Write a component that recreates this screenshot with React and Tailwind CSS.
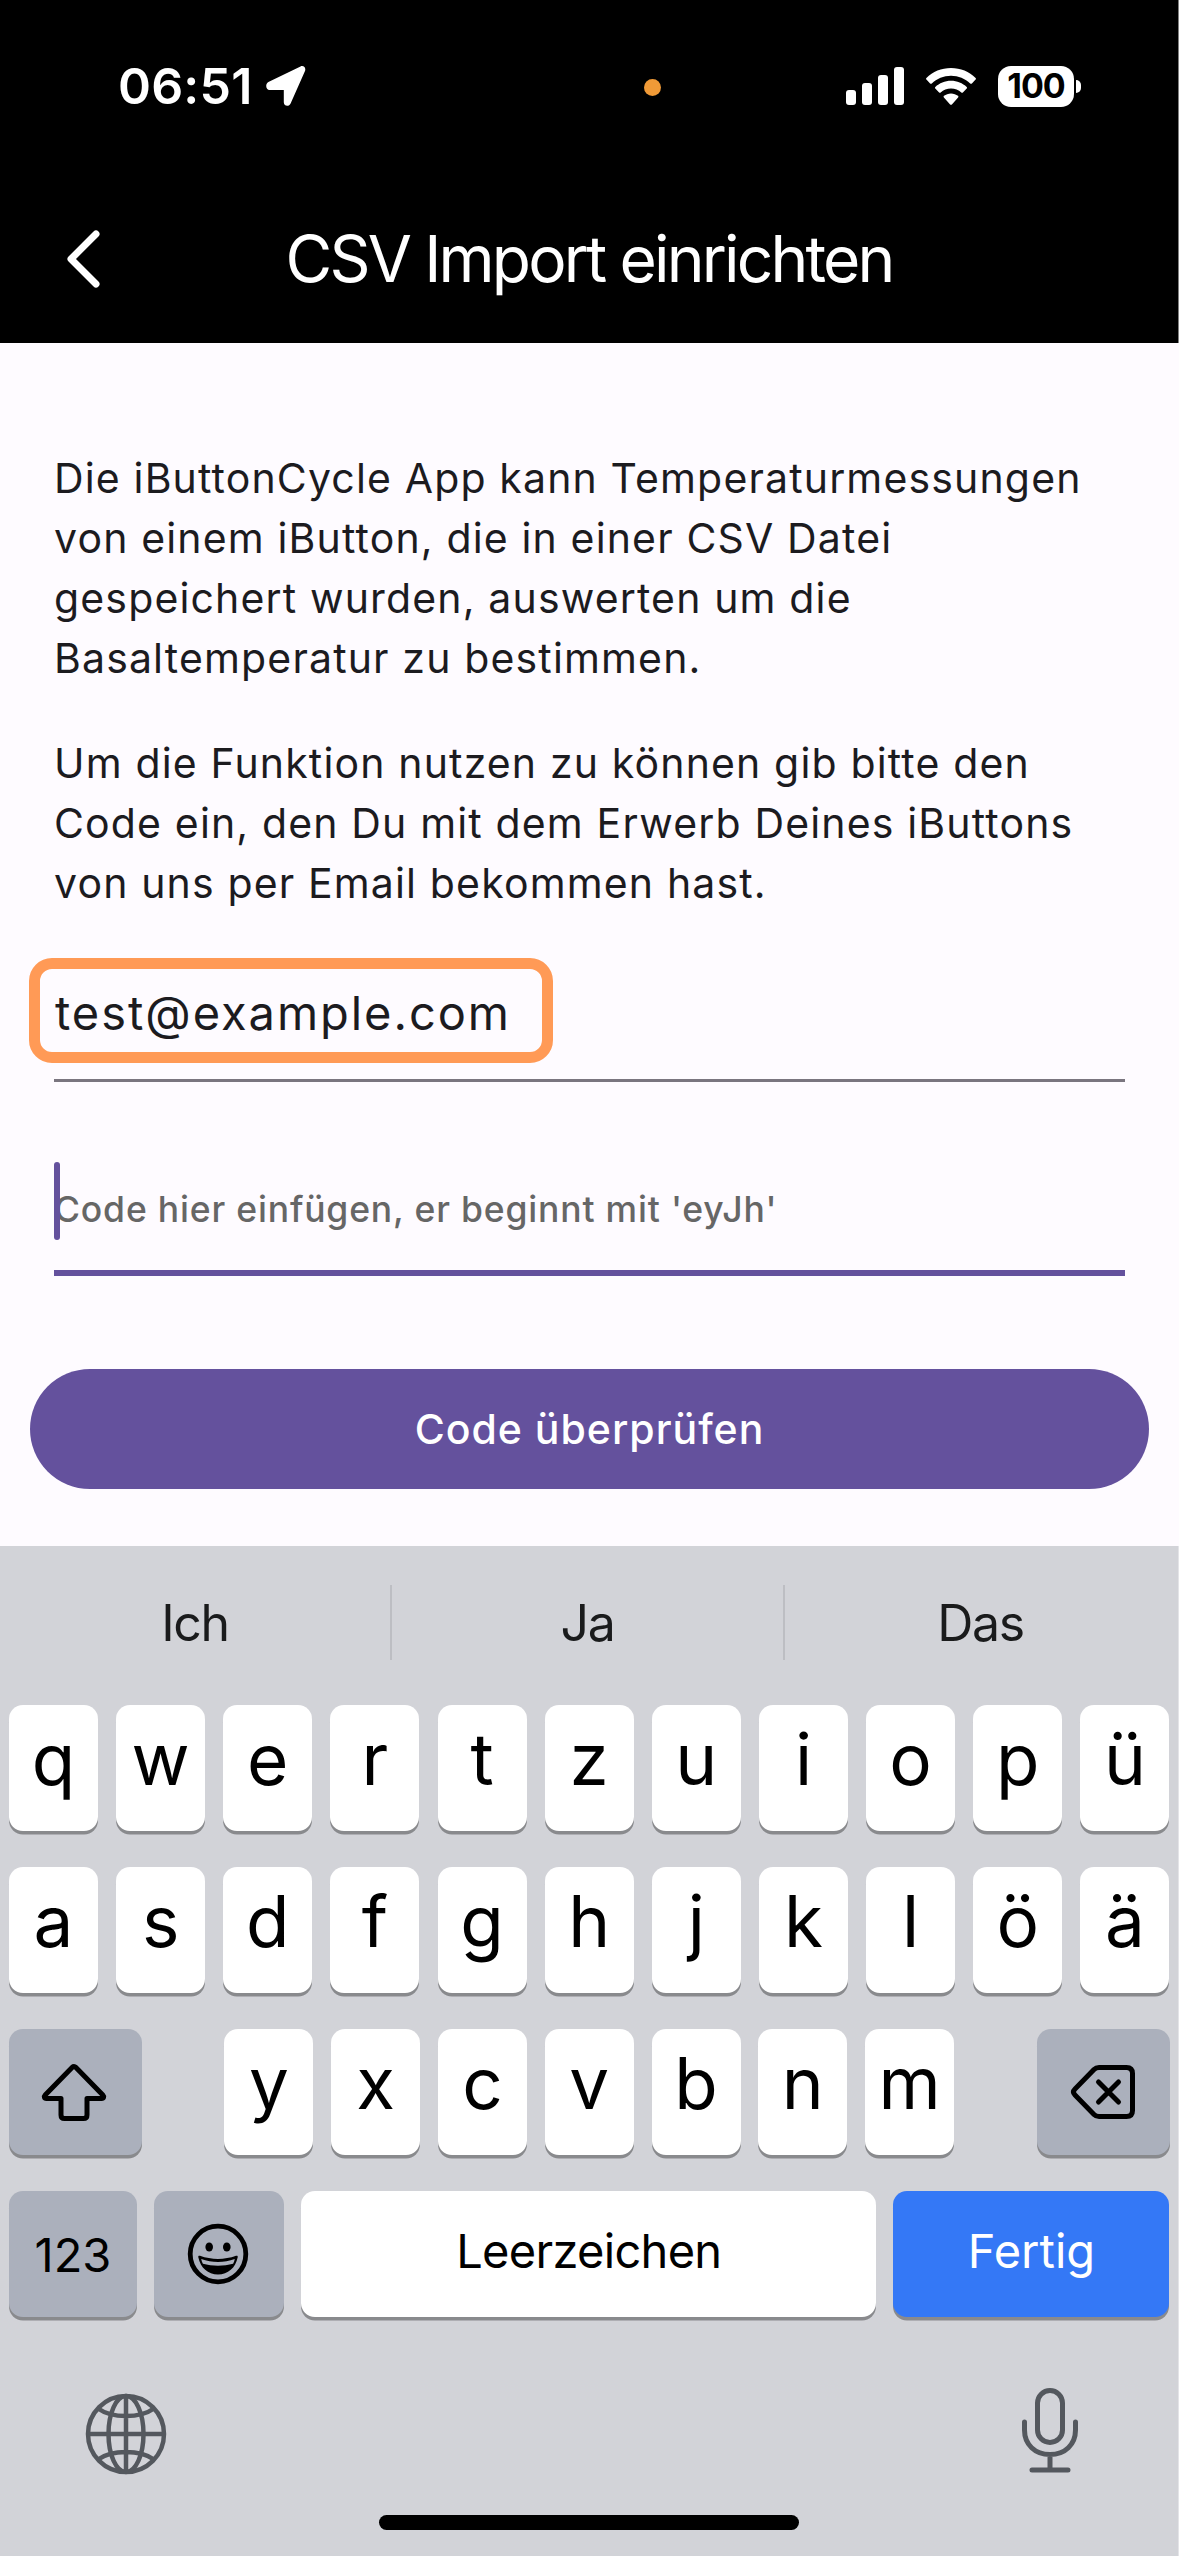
const FONT = "font-['Inter','Liberation_Sans',sans-serif]";

function StatusBar() {
  return (
    <div className="flex h-[172px] items-start pt-[56px] text-white">
      <div className="flex h-[60px] w-[644px] items-center pl-[118px]">
        <span className="w-[148px] text-[50px] leading-[60px] font-semibold tracking-[0.2px] whitespace-nowrap">06:51</span>
        <svg width="40" height="40" viewBox="0 0 40 40" fill="currentColor">
          <path d="M34.500.5 2.400 16C-1 17.800-.3 24 3.600 24h14.200v12.200c0 4 5.200 5 6.800 1.200L39 5C40.200 2 37.600-1 34.500.5Z" />
        </svg>
      </div>
      <div className="mt-[23px] size-[17px] rounded-full bg-[#f09a37]" />
      <div className="flex h-[60px] items-center pl-[185px]">
        <svg width="58" height="42" viewBox="0 0 58 42" fill="currentColor">
          <rect x="0" y="25" width="10" height="15" rx="3" />
          <rect x="16" y="18" width="10" height="22" rx="3" />
          <rect x="32" y="10" width="10" height="30" rx="3" />
          <rect x="48" y="2" width="10" height="38" rx="3" />
        </svg>
        <svg className="ml-[22px]" width="50" height="37" viewBox="0 0 50 37" fill="currentColor">
          <path d="M25 0C15.500 0 6.700 3.700.4 9.900c-.5.5-.5 1.200 0 1.700l3.700 3.800c.5.500 1.200.5 1.700 0C10.800 10.600 17.600 7.700 25 7.700s14.200 2.900 19.200 7.700c.5.500 1.200.500 1.700 0l3.700-3.800c.5-.5.500-1.200 0-1.700C43.300 3.700 34.500 0 25 0Z" />
          <path d="M25 12.700c-6.100 0-11.600 2.400-15.700 6.200-.5.500-.5 1.200 0 1.700l3.800 3.800c.5.500 1.100.5 1.600 0 2.700-2.400 6.300-3.900 10.300-3.900s7.600 1.500 10.300 3.900c.5.500 1.100.500 1.600 0l3.800-3.800c.5-.5.5-1.200 0-1.700-4.100-3.800-9.600-6.200-15.700-6.200Z" />
          <path d="M25 25.400c-2.700 0-5.100.9-7 2.400-.5.400-.5 1.100-.1 1.600l6.200 7c.5.500 1.300.5 1.800 0l6.200-7c.4-.5.400-1.200-.1-1.600-1.900-1.500-4.300-2.400-7-2.400Z" />
        </svg>
        <div className="ml-[22px] flex h-[41px] w-[76px] items-center justify-center rounded-[13px] bg-white text-[34px] leading-none font-bold tracking-[-1px] text-black">100</div>
        <div className="ml-[2px] h-[13px] w-[5px] rounded-r-full bg-white" />
      </div>
    </div>
  );
}

function Header() {
  return (
    <header className="h-[343px] border-r border-[#808080] bg-black">
      <StatusBar />
      <div className="flex h-[174px] items-center text-white">
        <svg className="ml-[66px]" width="34" height="58" viewBox="0 0 34 58" fill="none" stroke="currentColor" strokeWidth="7" strokeLinecap="round" strokeLinejoin="round">
          <path d="M30 4 5 29l25 25" />
        </svg>
        <h1 className="w-[978px] text-center text-[64px] leading-[80px] font-normal tracking-[-2.8px] whitespace-nowrap">CSV Import einrichten</h1>
      </div>
    </header>
  );
}

function Form() {
  return (
    <main className="flex h-[1203px] flex-col bg-[#fefbff] px-[30px] pt-[105px] text-[#1c1b1f]">
      <div className="flex flex-col gap-[45px] px-[24px] text-[41px] leading-[60px] tracking-[1.15px] whitespace-nowrap">
        <p>
          Die iButtonCycle App kann Temperaturmessungen<br />
          von einem iButton, die in einer CSV Datei<br />
          gespeichert wurden, auswerten um die<br />
          Basaltemperatur zu bestimmen.
        </p>
        <p>
          Um die Funktion nutzen zu können gib bitte den<br />
          Code ein, den Du mit dem Erwerb Deines iButtons<br />
          von uns per Email bekommen hast.
        </p>
      </div>
      <div className="mt-[45px] -ml-px flex h-[105px] w-[524px] items-center rounded-[23px] border-[11px] border-[#ff9a56] pt-[3px] pl-[15px] text-[47px] leading-none tracking-[1.95px]">
        test@example.com
      </div>
      <div className="mx-[24px] mt-[16px] h-[3px] bg-[#7a757f]" />
      <div className="mx-[24px] mt-[80px] flex h-[78px]">
        <div className="z-10 w-[6px] rounded-full bg-[#64519d]" />
        <span className="-ml-[6px] pt-[18px] text-[35.500px] leading-[60px] font-medium tracking-[0.820px] whitespace-nowrap text-[#666]">Code hier einfügen, er beginnt mit 'eyJh'</span>
      </div>
      <div className="mx-[24px] mt-[30px] h-[6px] bg-[#64519d]" />
      <button className="mt-[93px] flex h-[120px] items-center justify-center rounded-full bg-[#64519d] pt-[2px] text-[41px] font-medium tracking-[1px] text-white">
        Code überprüfen
      </button>
    </main>
  );
}

const KEY = "flex h-[126px] items-center justify-center rounded-[14px] shadow-[0_3.500px_0_#898a8d]";

function Letter({ children }) {
  return <div className={`${KEY} w-[89px] bg-white pb-[17px] text-[71px] leading-none`}>{children}</div>;
}

function ShiftIcon() {
  return (
    <svg className="mr-[3px] mb-[1px]" width="66" height="60" viewBox="0 0 66 60" fill="none" stroke="black" strokeWidth="5" strokeLinejoin="round">
      <path d="M31.300 5.200 4.200 33c-1.600 1.700-.8 3.500 1.200 3.500H20V53c0 2.200 1.200 3.500 3.500 3.500h19c2.300 0 3.500-1.300 3.500-3.500V36.500h14.600c2 0 2.800-1.800 1.200-3.500L34.700 5.200c-1-1-2.400-1-3.400 0Z" />
    </svg>
  );
}

function BackspaceIcon() {
  return (
    <svg className="mb-[1px]" width="66" height="56" viewBox="0 0 66 56" fill="none" stroke="black" strokeWidth="5" strokeLinecap="round" strokeLinejoin="round">
      <path d="M29 3.500h27.500c4 0 6 2 6 6v37c0 4-2 6-6 6H29c-2 0-3.500-.5-5-2L5 31c-2-2-2-4 0-6L24 5.500c1.500-1.500 3-2 5-2Z" />
      <path d="m28.500 18 20 20m0-20-20 20" />
    </svg>
  );
}

function SmileIcon() {
  return (
    <svg className="mr-[2px]" width="62" height="62" viewBox="0 0 62 62" fill="none">
      <circle cx="31" cy="31" r="27.800" stroke="black" strokeWidth="4.800" />
      <ellipse cx="22.200" cy="24" rx="3.800" ry="4.500" fill="black" />
      <ellipse cx="39.800" cy="24" rx="3.800" ry="4.500" fill="black" />
      <path d="M13 32.800c11.500 4.200 24.500 4.200 36 0 1.300-.5 2 .3 1.700 1.500C48.500 45 41 51.500 31 51.500S13.500 45 11.300 34.300c-.3-1.200.4-2 1.700-1.500Z" fill="black" />
      <path d="M14.200 36c10.800 4 22.800 4 33.600 0-.3 1.800-.9 3.400-1.700 4.700-9.400 2.600-20.800 2.600-30.200 0-.8-1.300-1.400-2.900-1.700-4.700Z" fill="#abb0bc" />
    </svg>
  );
}

function GlobeIcon() {
  return (
    <svg width="82" height="82" viewBox="0 0 82 82" fill="none" stroke="#54585e" strokeWidth="4.500">
      <circle cx="41" cy="41" r="38" />
      <ellipse cx="41" cy="41" rx="17.500" ry="38" />
      <path d="M41 3v76M3 41h76M13 15.500c14 10 42 10 56 0M13 66.500c14-10 42-10 56 0" />
    </svg>
  );
}

function MicIcon() {
  return (
    <svg width="58" height="86" viewBox="0 0 58 86" fill="none" stroke="#54585e" strokeWidth="5" strokeLinecap="round">
      <rect x="16.500" y="2.500" width="25" height="52" rx="12.500" />
      <path d="M3.500 34V42c0 14.500 10.500 24.500 25.500 24.500S54.500 56.500 54.500 42v-8M29 67v14M11 82h36" />
    </svg>
  );
}

function Keyboard() {
  return (
    <section className="h-[1010px] border-r border-[#e4e4e8] bg-[#d2d3d8] text-black">
      <div className="flex h-[153px] items-center text-[50px] leading-none tracking-[-1.3px] text-[#1a1b1c]">
        <div className="w-[390px] text-center">Ich</div>
        <div className="h-[75px] w-[2px] bg-[#bdbec3]" />
        <div className="w-[391px] text-center">Ja</div>
        <div className="h-[75px] w-[2px] bg-[#bdbec3]" />
        <div className="w-[391px] text-center">Das</div>
      </div>
      <div className="flex flex-col gap-[36px] pt-[6px] pr-[8.5px] pl-[9px]">
        <div className="flex justify-between">
          {[..."qwertzuiopü"].map((c) => <Letter key={c}>{c}</Letter>)}
        </div>
        <div className="flex justify-between">
          {[..."asdfghjklöä"].map((c) => <Letter key={c}>{c}</Letter>)}
        </div>
        <div className="flex justify-between">
          <div className={`${KEY} w-[133px] bg-[#abb0bc]`}><ShiftIcon /></div>
          <div className="flex gap-[17.8px]">
            {[..."yxcvbnm"].map((c) => <Letter key={c}>{c}</Letter>)}
          </div>
          <div className={`${KEY} w-[133px] bg-[#abb0bc]`}><BackspaceIcon /></div>
        </div>
        <div className="flex justify-between text-[47px] leading-none">
          <div className={`${KEY} w-[128px] bg-[#abb0bc]`}>123</div>
          <div className={`${KEY} w-[130px] bg-[#abb0bc]`}><SmileIcon /></div>
          <div className={`${KEY} w-[575px] bg-white pb-[8px] tracking-[-0.700px]`}>Leerzeichen</div>
          <div className={`${KEY} w-[276px] bg-[#3478f6] pb-[8px] text-white`}>Fertig</div>
        </div>
      </div>
      <div className="mt-[71px] flex h-[85px] items-start justify-between pr-[99px] pl-[85px]">
        <div className="pt-[5px]"><GlobeIcon /></div>
        <MicIcon />
      </div>
      <div className="mx-auto mt-[42px] h-[15px] w-[420px] rounded-full bg-black" />
    </section>
  );
}

export default function App() {
  return (
    <div className={`h-[2556px] w-[1179px] overflow-hidden bg-[#fefbff] ${FONT}`}>
      <Header />
      <Form />
      <Keyboard />
    </div>
  );
}
